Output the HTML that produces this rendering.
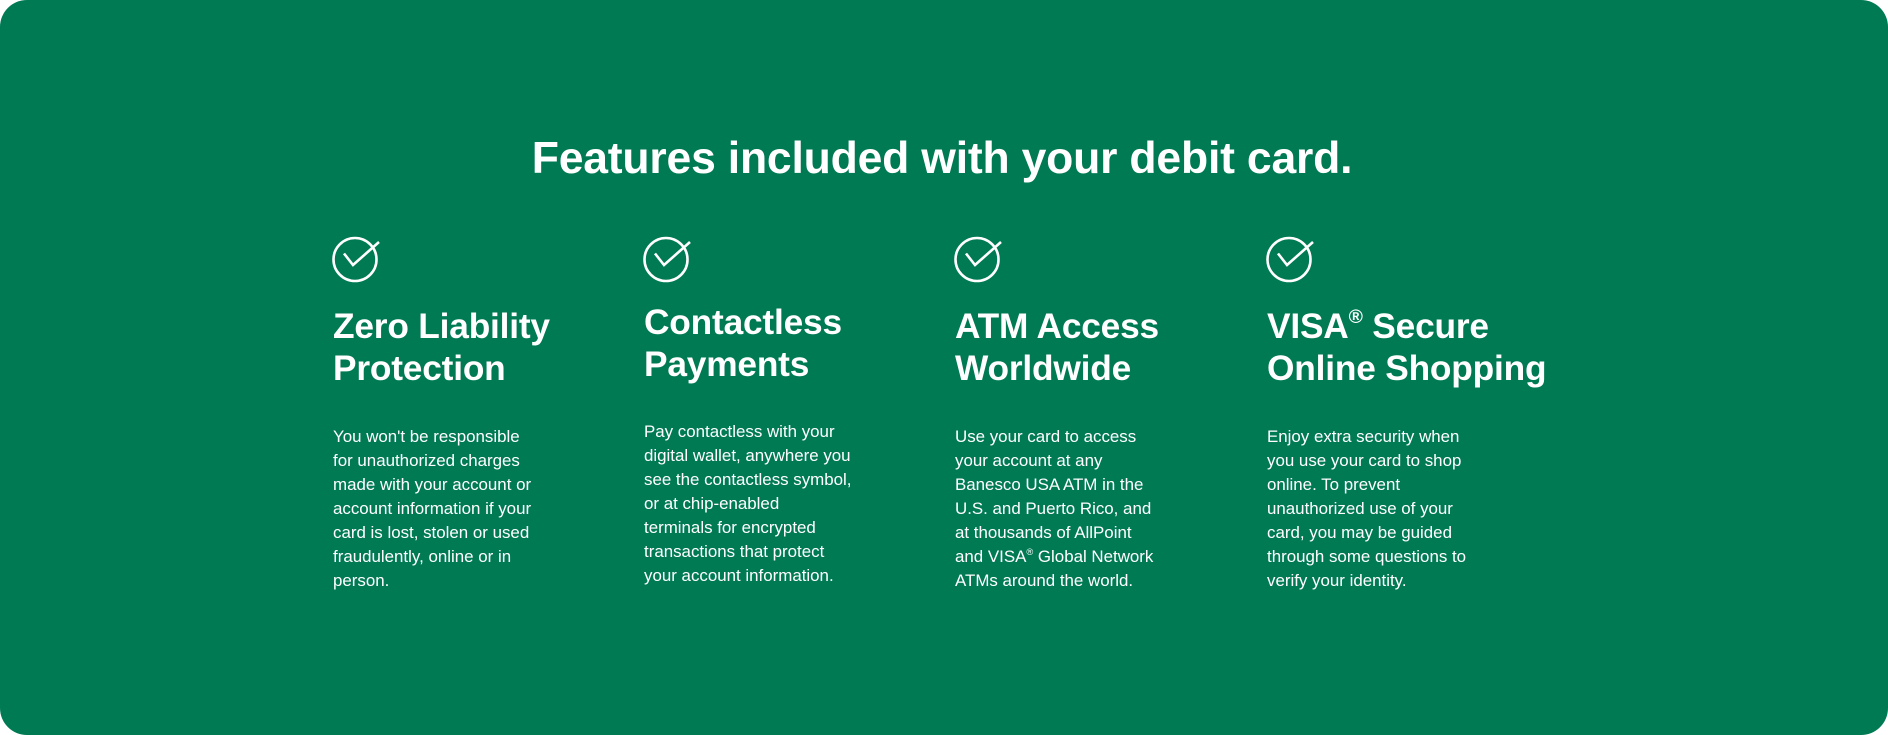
<!DOCTYPE html>
<html><head><meta charset="utf-8"><style>
html,body{margin:0;padding:0;background:#fff;}
body{width:1888px;height:735px;position:relative;overflow:hidden;font-family:"Liberation Sans",Arial,sans-serif;color:#fff;}
.card{position:absolute;left:0;top:0;width:1888px;height:735px;background:#007A53;border-radius:27px;}
h1{position:absolute;left:0;width:1884px;top:134px;margin:0;text-align:center;font-size:44.5px;line-height:50px;font-weight:700;letter-spacing:-0.2px;}
.col{position:absolute;width:300px;}
.col svg{position:absolute;left:-2px;top:0;}
h2{position:absolute;left:0;margin:0;font-size:35.3px;line-height:42px;font-weight:700;white-space:nowrap;letter-spacing:-0.2px;}
p{position:absolute;left:0;margin:0;font-size:16.9px;line-height:24px;white-space:nowrap;}
sup{font-size:0.55em;line-height:0;vertical-align:0;position:relative;top:-0.75em;}
</style></head><body>
<div class="card"></div>
<h1>Features included with your debit card.</h1>

<div class="col" style="left:333px;top:0">
<svg style="left:-1px;top:236px" width="50" height="48" viewBox="0 0 50 48"><circle cx="23" cy="23.5" r="21.5" fill="none" stroke="#fff" stroke-width="2.6"/><path d="M12 17.5 L21 29 L47 6" fill="none" stroke="#fff" stroke-width="2.6"/></svg>
<h2 style="top:306px">Zero Liability<br>Protection</h2>
<p style="top:425px">You won't be responsible<br>for unauthorized charges<br>made with your account or<br>account information if your<br>card is lost, stolen or used<br>fraudulently, online or in<br>person.</p>
</div>

<div class="col" style="left:644px;top:0">
<svg style="left:-1px;top:236px" width="50" height="48" viewBox="0 0 50 48"><circle cx="23" cy="23.5" r="21.5" fill="none" stroke="#fff" stroke-width="2.6"/><path d="M12 17.5 L21 29 L47 6" fill="none" stroke="#fff" stroke-width="2.6"/></svg>
<h2 style="top:302px">Contactless<br>Payments</h2>
<p style="top:420px">Pay contactless with your<br>digital wallet, anywhere you<br>see the contactless symbol,<br>or at chip-enabled<br>terminals for encrypted<br>transactions that protect<br>your account information.</p>
</div>

<div class="col" style="left:955px;top:0">
<svg style="left:-1px;top:236px" width="50" height="48" viewBox="0 0 50 48"><circle cx="23" cy="23.5" r="21.5" fill="none" stroke="#fff" stroke-width="2.6"/><path d="M12 17.5 L21 29 L47 6" fill="none" stroke="#fff" stroke-width="2.6"/></svg>
<h2 style="top:306px">ATM Access<br>Worldwide</h2>
<p style="top:425px">Use your card to access<br>your account at any<br>Banesco USA ATM in the<br>U.S. and Puerto Rico, and<br>at thousands of AllPoint<br>and VISA<sup>®</sup> Global Network<br>ATMs around the world.</p>
</div>

<div class="col" style="left:1267px;top:0">
<svg style="left:-1px;top:236px" width="50" height="48" viewBox="0 0 50 48"><circle cx="23" cy="23.5" r="21.5" fill="none" stroke="#fff" stroke-width="2.6"/><path d="M12 17.5 L21 29 L47 6" fill="none" stroke="#fff" stroke-width="2.6"/></svg>
<h2 style="top:306px">VISA<sup>®</sup> Secure<br>Online Shopping</h2>
<p style="top:425px">Enjoy extra security when<br>you use your card to shop<br>online. To prevent<br>unauthorized use of your<br>card, you may be guided<br>through some questions to<br>verify your identity.</p>
</div>
</body></html>
